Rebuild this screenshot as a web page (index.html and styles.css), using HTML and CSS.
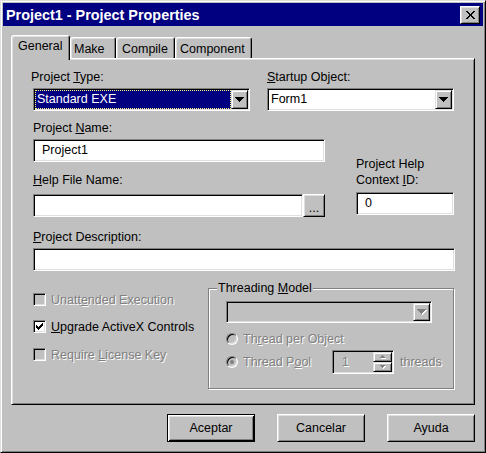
FILE: index.html
```html
<!DOCTYPE html>
<html lang="en">
<head>
<meta charset="utf-8">
<title>Project1 - Project Properties</title>
<link rel="stylesheet" href="styles.css">
</head>
<body>
<div class="window">
  <div class="titlebar">
    <span class="title">Project1 - Project Properties</span>
    <button class="title-close raised" aria-label="Close">
      <svg width="9" height="8" viewBox="0 0 9 8"><path d="M0 0h2v1H0zM7 0h2v1H7zM1 1h2v1H1zM6 1h2v1H6zM2 2h2v1H2zM5 2h2v1H5zM3 3h3v2H3zM2 5h2v1H2zM5 5h2v1H5zM1 6h2v1H1zM6 6h2v1H6zM0 7h2v1H0zM7 7h2v1H7z" fill="#000"/></svg>
    </button>
  </div>

  <div class="dialog">
    <div class="tabs">
      <div class="tab tab-general active">General</div>
      <div class="tab tab-make">Make</div>
      <div class="tab tab-compile">Compile</div>
      <div class="tab tab-component">Component</div>
    </div>

    <div class="panel">
      <div class="row-top">
        <div class="field field-type">
          <span class="label label-type">Project <u>T</u>ype:</span>
          <div class="combo sunken">
            <div class="combo-value selected">Standard EXE</div>
            <div class="combo-btn raised">
              <svg width="9" height="5" viewBox="0 0 9 5"><path d="M0 0h9v1H0zM1 1h7v1H1zM2 2h5v1H2zM3 3h3v1H3zM4 4h1v1H4z" fill="#000"/></svg>
            </div>
          </div>
        </div>
        <div class="field field-startup">
          <span class="label"><u>S</u>tartup Object:</span>
          <div class="combo sunken">
            <div class="combo-value">Form1</div>
            <div class="combo-btn raised">
              <svg width="9" height="5" viewBox="0 0 9 5"><path d="M0 0h9v1H0zM1 1h7v1H1zM2 2h5v1H2zM3 3h3v1H3zM4 4h1v1H4z" fill="#000"/></svg>
            </div>
          </div>
        </div>
      </div>

      <div class="row-mid">
        <div class="mid-left">
          <span class="label">Project <u>N</u>ame:</span>
          <div class="textbox sunken">Project1</div>
          <span class="label label-help"><u>H</u>elp File Name:</span>
          <div class="help-row">
            <div class="textbox textbox-help sunken"></div>
            <button class="browse raised">...</button>
          </div>
        </div>
        <div class="mid-right">
          <span class="label label-two">Project Help<br>Context <u>I</u>D:</span>
          <div class="textbox textbox-context sunken">0</div>
        </div>
      </div>

      <div class="field field-desc">
        <span class="label"><u>P</u>roject Description:</span>
        <div class="textbox sunken"></div>
      </div>

      <div class="row-bottom">
        <div class="checks">
          <div class="check disabled">
            <span class="checkbox sunken"></span>
            <span class="check-text">Unatt<u>e</u>nded Execution</span>
          </div>
          <div class="check">
            <span class="checkbox checkbox-on sunken">
              <svg width="7" height="7" viewBox="0 0 7 7"><path d="M6 0h1v1H6zM5 1h2v1H5zM0 2h1v1H0zM4 2h3v1H4zM0 3h2v1H0zM3 3h3v1H3zM0 4h5v1H0zM1 5h3v1H1zM2 6h1v1H2z" fill="#000"/></svg>
            </span>
            <span class="check-text"><u>U</u>pgrade ActiveX Controls</span>
          </div>
          <div class="check check-license disabled">
            <span class="checkbox sunken"></span>
            <span class="check-text">Require <u>L</u>icense Key</span>
          </div>
        </div>

        <div class="group">
          <span class="group-label">Threading <u>M</u>odel</span>
          <div class="combo combo-disabled sunken">
            <div class="combo-value"></div>
            <div class="combo-btn raised">
              <svg width="10" height="6" viewBox="0 0 10 6"><path d="M1 1h9v1H1zM2 2h7v1H2zM3 3h5v1H3zM4 4h3v1H4zM5 5h1v1H5z" fill="#fff"/><path d="M0 0h9v1H0zM1 1h7v1H1zM2 2h5v1H2zM3 3h3v1H3zM4 4h1v1H4z" fill="#808080"/></svg>
            </div>
          </div>
          <div class="radio-row disabled">
            <span class="radio"></span>
            <span class="radio-text">Th<u>r</u>ead per Object</span>
          </div>
          <div class="radio-row radio-row-pool disabled">
            <span class="radio radio-on"></span>
            <span class="radio-text pool-text">Thread P<u>o</u>ol</span>
            <div class="spin sunken">
              <div class="spin-field">1</div>
              <div class="spin-btns">
                <div class="spin-btn raised">
                  <svg width="6" height="4" viewBox="0 0 6 4"><path d="M3 1h1v1H3zM2 2h3v1H2zM1 3h5v1H1z" fill="#fff"/><path d="M2 0h1v1H2zM1 1h3v1H1zM0 2h5v1H0z" fill="#808080"/></svg>
                </div>
                <div class="spin-btn raised">
                  <svg width="6" height="4" viewBox="0 0 6 4"><path d="M1 1h5v1H1zM2 2h3v1H2zM3 3h1v1H3z" fill="#fff"/><path d="M0 0h5v1H0zM1 1h3v1H1zM2 2h1v1H2z" fill="#808080"/></svg>
                </div>
              </div>
            </div>
            <span class="threads">threads</span>
          </div>
        </div>
      </div>
    </div>

    <div class="buttons">
      <button class="btn btn-default">Aceptar</button>
      <button class="btn raised">Cancelar</button>
      <button class="btn raised">Ayuda</button>
    </div>
  </div>
</div>
</body>
</html>
```

FILE: styles.css
```css
* { box-sizing: border-box; }

html, body { margin: 0; padding: 0; }

body {
  width: 486px;
  height: 453px;
  overflow: hidden;
  background: #c0c0c0;
  font-family: "Liberation Sans", Arial, sans-serif;
  font-size: 12.5px;
  line-height: 16px;
  color: #000;
}

button {
  font: inherit;
  color: inherit;
  margin: 0;
  padding: 0;
}

/* 3D bevels */
.raised {
  background: #c0c0c0;
  border: 1px solid;
  border-color: #dfdfdf #000 #000 #dfdfdf;
  box-shadow: inset 1px 1px #fff, inset -1px -1px #808080;
}

.sunken {
  border: 1px solid;
  border-color: #808080 #fff #fff #808080;
  box-shadow: inset 1px 1px #000, inset -1px -1px #dfdfdf;
}

/* Window frame */
.window {
  width: 486px;
  height: 453px;
  border: 1px solid;
  border-color: #dfdfdf #000 #000 #dfdfdf;
  box-shadow: inset 1px 1px #fff, inset -1px -1px #808080;
  padding: 2px;
  display: flex;
  flex-direction: column;
}

.titlebar {
  flex: none;
  height: 23px;
  background: #000080;
  color: #fff;
  display: flex;
  align-items: center;
  justify-content: space-between;
  padding: 0 3px;
}

.title {
  font-weight: bold;
  font-size: 14.4px;
  white-space: nowrap;
}

.title-close {
  width: 20px;
  height: 18px;
  display: flex;
  align-items: center;
  justify-content: center;
  border-color: #fff #000 #000 #fff;
  box-shadow: inset 1px 1px #dfdfdf, inset -1px -1px #808080;
}

.title-close svg { display: block; }

/* Dialog body */
.dialog {
  flex: 1;
  padding: 9px 8px 0;
  display: flex;
  flex-direction: column;
}

.tabs {
  display: flex;
  align-items: flex-end;
  height: 23px;
  position: relative;
  z-index: 1;
}

.tab {
  height: 21px;
  background: #c0c0c0;
  border: 1px solid;
  border-bottom: none;
  border-color: #fff #000 transparent #fff;
  border-radius: 3px 3px 0 0;
  box-shadow: inset 1px 1px #dfdfdf, inset -1px 0 #808080;
  padding-top: 3px;
  white-space: nowrap;
}

.tab.active {
  height: 25px;
  margin-bottom: -2px;
  padding-top: 2px;
}

.tab-general { width: 59px; padding-left: 6px; }
.tab-make { width: 46px; padding-left: 3px; }
.tab-compile { width: 59px; padding-left: 5px; }
.tab-component { width: 77px; padding-left: 4px; }

.panel {
  width: 464px;
  height: 347px;
  border: 1px solid;
  border-color: #fff #000 #000 #fff;
  box-shadow: inset 1px 1px #dfdfdf, inset -1px -1px #808080;
  padding: 10px 0 0 21px;
}

.label {
  display: block;
  height: 16px;
  margin-bottom: 3px;
  white-space: nowrap;
}

.label-type { margin-left: -2px; }

.label-two { height: 32px; margin-bottom: 4px; }

/* Combo boxes */
.row-top {
  display: flex;
  gap: 17px;
}

.field-type { width: 217px; }
.field-startup { width: 187px; }

.combo {
  height: 23px;
  display: flex;
  padding: 1px;
  background: #fff;
}

.combo-value {
  flex: 1;
  padding-left: 1px;
  border: 1px solid transparent;
  line-height: 17px;
  white-space: nowrap;
  overflow: hidden;
}

.combo-value.selected {
  background: #000080;
  color: #fff;
  border: 1px dotted #ffff7f;
}

.combo-btn {
  flex: none;
  width: 17px;
  display: flex;
  align-items: center;
  justify-content: center;
}

.combo-btn svg { display: block; }

.combo-disabled {
  width: 206px;
  height: 22px;
  margin: 5px 0 0 17px;
  background: #c0c0c0;
}

/* Text boxes */
.textbox {
  height: 23px;
  background: #fff;
  padding-left: 8px;
  line-height: 21px;
  white-space: nowrap;
}

.row-mid {
  display: flex;
  gap: 31px;
  margin-top: 9px;
}

.mid-left { width: 292px; }

.label-help { margin-top: 10px; margin-bottom: 6px; }

.help-row { display: flex; }

.textbox-help { width: 270px; }

.browse {
  width: 22px;
  height: 23px;
  border-color: #fff #000 #000 #fff;
  box-shadow: inset 1px 1px #dfdfdf, inset -1px -1px #808080;
  line-height: 16px;
  padding-top: 4px;
  text-align: center;
}

.mid-right {
  width: 98px;
  align-self: flex-end;
  margin-bottom: 2px;
}

.field-desc { width: 422px; margin-top: 12px; }

/* Options and threading group */
.row-bottom {
  display: flex;
  margin-top: 17px;
}

.checks {
  width: 175px;
  padding-top: 5px;
  display: flex;
  flex-direction: column;
  gap: 14px;
}

.check {
  display: flex;
  align-items: center;
  height: 13px;
  white-space: nowrap;
}

.check-license { margin-top: 1px; }

.checkbox {
  flex: none;
  width: 13px;
  height: 13px;
  background: #fff;
  display: flex;
  align-items: center;
  justify-content: center;
  margin-right: 5px;
}

.checkbox svg { display: block; }

.disabled .checkbox { background: #c0c0c0; }

.disabled .check-text,
.disabled .radio-text,
.disabled .threads,
.disabled .spin-field {
  color: #808080;
  text-shadow: 1px 1px #fff;
}

.group {
  width: 246px;
  height: 101px;
  border: 1px solid #808080;
  box-shadow: inset 1px 1px #fff, 1px 1px #fff;
  display: flex;
  flex-direction: column;
}

.group-label {
  align-self: flex-start;
  height: 16px;
  margin: -9px 0 0 8px;
  padding: 0 1px;
  background: #c0c0c0;
  white-space: nowrap;
}

.radio-row {
  display: flex;
  align-items: center;
  height: 16px;
  margin-top: 8px;
  padding-left: 17px;
  white-space: nowrap;
}

.radio-row-pool {
  height: 24px;
  margin-top: 3px;
}

.radio {
  flex: none;
  width: 12px;
  height: 12px;
  border-radius: 50%;
  border: 1px solid;
  border-color: #808080 #fff #fff #808080;
  box-shadow: inset 1px 1px #000, inset -1px -1px #dfdfdf;
  background: #c0c0c0;
  margin-right: 5px;
  display: flex;
  align-items: center;
  justify-content: center;
}

.radio-on::after {
  content: "";
  width: 4px;
  height: 4px;
  border-radius: 50%;
  background: #808080;
}

.pool-text { width: 89px; }

.spin {
  width: 62px;
  height: 24px;
  display: flex;
  padding: 1px;
  background: #c0c0c0;
}

.spin-field {
  flex: 1;
  padding-left: 8px;
  line-height: 20px;
}

.spin-btns {
  width: 19px;
  display: flex;
  flex-direction: column;
}

.spin-btn {
  flex: 1;
  display: flex;
  align-items: center;
  justify-content: center;
}

.spin-btn svg { display: block; }

.threads { margin-left: 6px; }

/* Dialog buttons */
.buttons {
  display: flex;
  justify-content: flex-end;
  gap: 22px;
  margin-top: 9px;
}

.btn {
  width: 88px;
  height: 28px;
  text-align: center;
  border-color: #fff #000 #000 #fff;
  box-shadow: inset 1px 1px #dfdfdf, inset -1px -1px #808080;
}

.btn-default {
  background: #c0c0c0;
  border: 1px solid #000;
  box-shadow: inset 1px 1px #fff, inset -1px -1px #000, inset 2px 2px #dfdfdf, inset -2px -2px #808080;
}
```
